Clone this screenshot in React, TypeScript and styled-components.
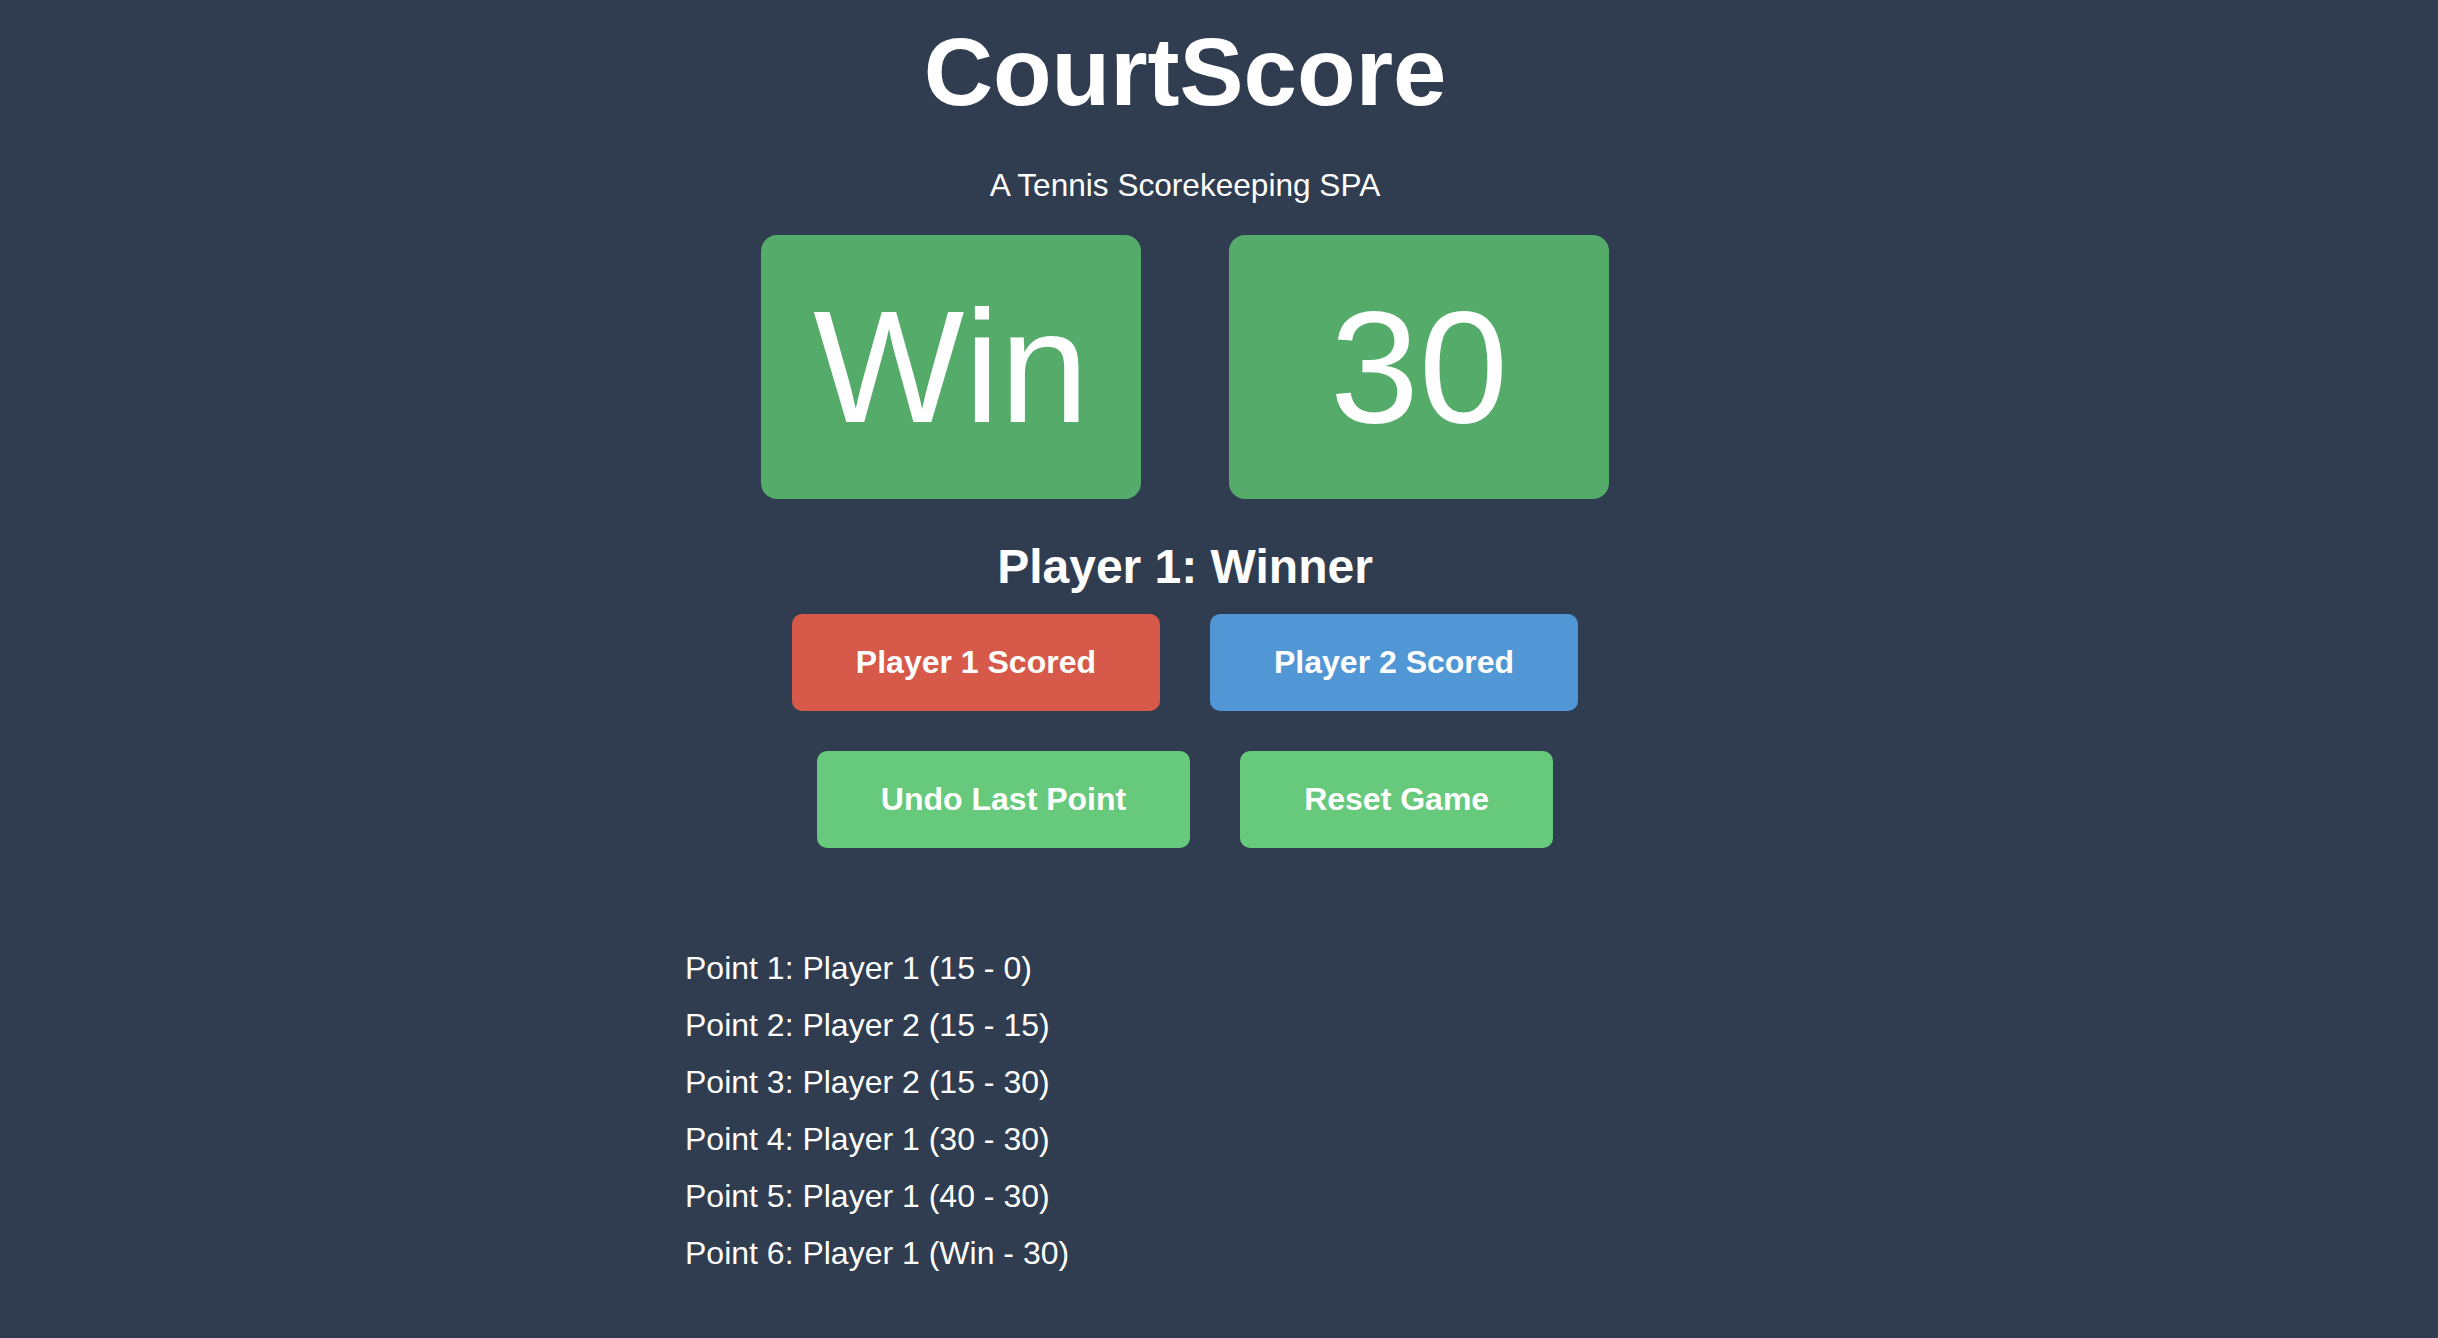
import React from "react";
import styled, { createGlobalStyle } from "styled-components";

const GlobalStyle = createGlobalStyle`
  html, body {
    margin: 0;
    padding: 0;
    background: #303d50;
  }
  body {
    font-family: "Liberation Sans", Arial, Helvetica, sans-serif;
    color: #ffffff;
    min-height: 1338px;
  }
`;

const Page = styled.div`
  box-sizing: border-box;
  width: 100%;
  min-height: 1338px;
  padding: 17px 68px 0 0;
  display: flex;
  flex-direction: column;
  align-items: center;
  background: #303d50;
`;

const Title = styled.h1`
  margin: 0;
  font-size: 96px;
  line-height: 110px;
  font-weight: 700;
  text-align: center;
`;

const Subtitle = styled.p`
  margin: 40px 0 0;
  font-size: 31.6px;
  line-height: 36px;
  font-weight: 400;
  text-align: center;
`;

const ScoreRow = styled.div`
  margin-top: 32px;
  display: flex;
  gap: 88px;
`;

const ScoreBox = styled.div`
  width: 380px;
  height: 264px;
  border-radius: 16px;
  background: #55ac6a;
  display: flex;
  align-items: center;
  justify-content: center;
  font-size: 160px;
  line-height: 1;
  font-weight: 400;
`;

const Status = styled.h2`
  margin: 40px 0 0;
  font-size: 48px;
  line-height: 56px;
  font-weight: 700;
  text-align: center;
`;

const ButtonRow = styled.div<{ $top: number }>`
  margin-top: ${(p) => p.$top}px;
  display: flex;
  gap: 50px;
`;

const variants = {
  red: "#d65949",
  blue: "#5196d5",
  green: "#66c97b",
};

const ActionButton = styled.button<{ $variant: keyof typeof variants }>`
  border: none;
  border-radius: 10px;
  background: ${(p) => variants[p.$variant]};
  color: #ffffff;
  font-family: "Liberation Sans", Arial, Helvetica, sans-serif;
  font-size: 32px;
  line-height: 37px;
  font-weight: 700;
  padding: 30px 64px;
  cursor: pointer;
`;

const History = styled.ul`
  list-style: none;
  margin: 92px 0 0;
  padding: 0;
  width: 1000px;
`;

const HistoryItem = styled.li`
  font-size: 32px;
  line-height: 57px;
  font-weight: 400;
`;

const points = [
  "Point 1: Player 1 (15 - 0)",
  "Point 2: Player 2 (15 - 15)",
  "Point 3: Player 2 (15 - 30)",
  "Point 4: Player 1 (30 - 30)",
  "Point 5: Player 1 (40 - 30)",
  "Point 6: Player 1 (Win - 30)",
];

export default function App() {
  return (
    <>
      <GlobalStyle />
      <Page>
        <Title>CourtScore</Title>
        <Subtitle>A Tennis Scorekeeping SPA</Subtitle>
        <ScoreRow>
          <ScoreBox>Win</ScoreBox>
          <ScoreBox>30</ScoreBox>
        </ScoreRow>
        <Status>Player 1: Winner</Status>
        <ButtonRow $top={19}>
          <ActionButton $variant="red">Player 1 Scored</ActionButton>
          <ActionButton $variant="blue">Player 2 Scored</ActionButton>
        </ButtonRow>
        <ButtonRow $top={40}>
          <ActionButton $variant="green">Undo Last Point</ActionButton>
          <ActionButton $variant="green">Reset Game</ActionButton>
        </ButtonRow>
        <History>
          {points.map((p) => (
            <HistoryItem key={p}>{p}</HistoryItem>
          ))}
        </History>
      </Page>
    </>
  );
}
